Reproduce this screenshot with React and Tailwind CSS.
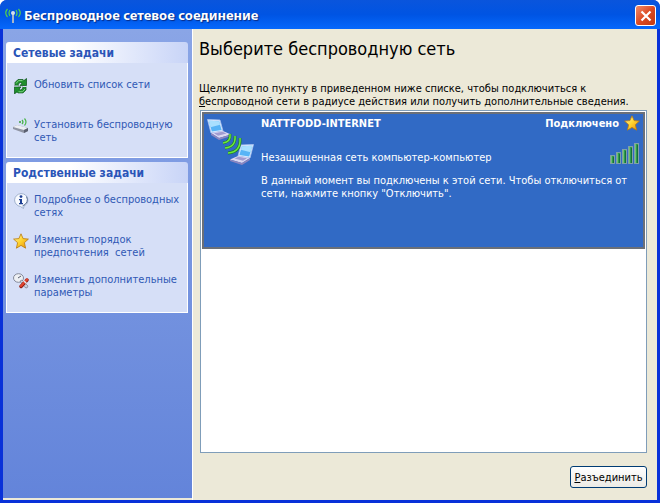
import { useId } from "react";

const RefreshArrow = () => (
  <>
    <path d="M2 8V4.500L5 1.500 10 1.500 11 2.500 13.500.5 13.500 7.500H7L9 5.200 7.500 4.500 5.500 5.500 5 8z" fill="#1f8f2e" stroke="#0a5217" strokeWidth=".7" />
    <path d="M3 5.500L5.500 2.600H9.500" fill="none" stroke="#7fd885" />
  </>
);

const RefreshIcon = () => (
  <svg viewBox="0 0 16 16" className="size-4 shrink-0" aria-hidden="true">
    <RefreshArrow />
    <g transform="rotate(180 7.500 8.200)">
      <RefreshArrow />
    </g>
    <path d="M2 8h3M10 8.500h3.500" stroke="#d6dff7" strokeWidth="1" />
  </svg>
);

const RouterIcon = () => (
  <svg viewBox="0 0 16 16" className="size-4 shrink-0" aria-hidden="true">
    <path d="M0 9l4-2 11 3v3l-4 2L0 11z" fill="#8f94a3" />
    <path d="M0 9l4-2 11 3-4 2z" fill="#eceef4" />
    <path d="M11 12l4-2v3l-4 2z" fill="#5b6070" />
    <circle cx="7" cy="4" r="1" fill="#3a9a3a" />
    <path d="M9 2q2 2 0 4M11.500 .5q3 3.500 0 7" fill="none" stroke="#49b549" strokeWidth="1.200" />
  </svg>
);

const InfoIcon = () => (
  <svg viewBox="0 0 16 16" className="size-4 shrink-0" aria-hidden="true">
    <path d="M8 .6a7 6.500 0 0 1 3 12.300L10.500 15.500 7.500 13.500A7 6.500 0 0 1 8 .6z" fill="#f7faff" stroke="#9fb0cc" />
    <path d="M13.500 3.500q3 6-4 9.500" fill="none" stroke="#5f7398" />
    <circle cx="8" cy="3.600" r="1.400" fill="#1c3f94" />
    <path d="M6 6h3v4h1v1.300H6V10h1V7.200H6z" fill="#1c3f94" />
  </svg>
);

const StarIcon = () => {
  const id = useId();
  return (
    <svg viewBox="0 0 16 16" className="size-4 shrink-0" aria-hidden="true">
      <linearGradient id={id} x1="0" y1="0" x2="1" y2="1">
        <stop offset="0" stopColor="#fffbb0" />
        <stop offset=".5" stopColor="#ffd32e" />
        <stop offset="1" stopColor="#e88a08" />
      </linearGradient>
      <path
        d="M8 .8l2.100 4.800 5.300.5-4 3.600 1.200 5.500L8 12.400l-4.600 2.800 1.200-5.500-4-3.600 5.300-.5z"
        fill={`url(#${id})`}
        stroke="#b9780c"
        strokeWidth=".8"
        strokeLinejoin="round"
      />
    </svg>
  );
};

const SettingsIcon = () => (
  <svg viewBox="0 0 16 16" className="size-4 shrink-0" aria-hidden="true">
    <ellipse cx="5.500" cy="5" rx="5" ry="4.300" fill="#eef0f4" stroke="#84899a" />
    <path d="M5 5l3-2" stroke="#555b6c" fill="none" />
    <path d="M7 8l2-1 6 6-1 2-2-.5z" fill="#c9ced8" stroke="#6b7080" strokeWidth=".6" />
    <path d="M14 7l-6 6.500" stroke="#8e1c12" strokeWidth="3.400" strokeLinecap="round" />
    <path d="M14 6.500l-6 6.500" stroke="#e2452f" strokeWidth="2.200" strokeLinecap="round" />
    <path d="M10.500 7.500l3 3" stroke="#e6e8ee" strokeWidth="1.400" />
  </svg>
);

const AntennaIcon = () => (
  <svg viewBox="0 0 18 16" className="h-4 w-[18px] shrink-0" aria-hidden="true">
    <path d="M9 6v9" stroke="#a9b6c9" strokeWidth="2" />
    <circle cx="9" cy="5" r="2" fill="#d5deea" />
    <path d="M6 2q-2 3 0 6M12 2q2 3 0 6M3.500 1q-3.500 4 0 8M14.500 1q3.500 4 0 8" fill="none" stroke="#52d04e" strokeWidth="1.200" />
  </svg>
);

const Laptop = () => (
  <>
    <path d="M.5 1.500l12.500.5 3 11-12 2z" fill="#dcecff" stroke="#a8c2f0" strokeWidth=".8" />
    <path d="M1.800 2.700l10.300.5 2.500 8.800-9.800 1.600z" fill="#58b4f6" />
    <path d="M1.800 2.700l10.300.5 1 3.600-9.600 2.500z" fill="#a9e0ff" />
    <path d="M4 15l12-2 8 3.500-12 3.500z" fill="#dcd8f2" />
    <path d="M7 15.300l8.500-1.500 4 1.700-8.500 2.200z" fill="#a09bd0" />
    <path d="M4 15l8 5 12-3.500v1.500l-12 4-8-5z" fill="#8c86bf" />
  </>
);

const AdHocIcon = () => (
  <svg viewBox="0 0 48 48" className="size-12 shrink-0" aria-hidden="true">
    <g transform="translate(1 1)">
      <Laptop />
    </g>
    <g transform="translate(48 26) scale(-1 1)">
      <Laptop />
    </g>
    <g fill="none" stroke="#1f7d2a" strokeWidth="2.800">
      <path d="M24 17q1 8-7 9M29 19q1 11-10 12M34 21q1 14-12 15" />
    </g>
    <g fill="none" stroke="#6be63c" strokeWidth="1.500">
      <path d="M24 17q1 8-7 9M29 19q1 11-10 12M34 21q1 14-12 15" />
    </g>
  </svg>
);

const SignalIcon = () => (
  <svg viewBox="0 0 30 22" className="h-[22px] w-[30px]" role="img" aria-label="Уровень сигнала">
    {[8, 11, 14, 17, 20].map((h, i) => (
      <g key={h}>
        <rect x={i * 6 + 0.5} y={21.5 - h} width="4" height={h} fill="#2f9a4c" stroke="#7f9fa8" />
        <rect x={i * 6 + 1} y={22 - h} width="1" height={h - 1} fill="#6cc070" />
        <rect x={i * 6 + 3} y={23 - h} width="1" height={h - 2} fill="#16703a" />
      </g>
    ))}
  </svg>
);

const Task = ({ icon, children }) => (
  <li>
    <a href="#" className="flex items-start gap-[5px] text-[#3059b5] hover:underline">
      {icon}
      <span>{children}</span>
    </a>
  </li>
);

const TaskPanel = ({ title, listClass, children }) => (
  <section>
    <h2 className="flex h-[21px] items-center rounded-t-[3px] bg-linear-to-r from-white from-35% to-[#c8d4f7] px-[7px] text-xs font-bold text-[#2a55b8]">
      {title}
    </h2>
    <ul className={`flex flex-col border border-t-0 border-white bg-[#d6dff7] pr-[2px] pb-[13px] pl-[6px] ${listClass}`}>
      {children}
    </ul>
  </section>
);

const App = () => {
  return (
    <div className="flex min-h-screen flex-col overflow-hidden rounded-t-[7px] bg-[#0831d9] font-['DejaVu_Sans_Condensed','DejaVu_Sans',sans-serif] text-[11px] leading-[13px] text-black">
      <header className="flex h-[29px] shrink-0 items-center gap-[2px] bg-linear-to-b from-[#0a55dc] via-[#0054e3] to-[#0668fc] px-1 pt-[2px]">
        <AntennaIcon />
        <h1 className="grow font-['Noto_Sans',sans-serif] text-[13px] font-bold text-white [text-shadow:1px_1px_1px_#0a2a80]">
          Беспроводное сетевое соединение
        </h1>
        <button
          type="button"
          aria-label="Закрыть"
          className="flex size-[21px] items-center justify-center rounded-[3px] border border-white bg-linear-to-br from-[#f08a68] via-[#dc4a22] to-[#c23a10]"
        >
          <svg viewBox="0 0 12 12" className="size-3" aria-hidden="true">
            <path d="M1.500 1.500l9 9M10.500 1.500l-9 9" stroke="#fff" strokeWidth="2.200" />
          </svg>
        </button>
      </header>

      <div className="flex grow border-x-[3px] border-b-[3px] border-[#0831d9] bg-[#ece9d8]">
        <aside className="mb-[2px] flex w-[189px] shrink-0 flex-col gap-1 bg-linear-to-b from-[#8aa5e6] to-[#6384da] pt-[13px] pr-1 pl-[3px]">
          <TaskPanel title="Сетевые задачи" listClass="gap-6 pt-[15px]">
            <Task icon={<RefreshIcon />}>Обновить список сети</Task>
            <Task icon={<RouterIcon />}>Установить беспроводную сеть</Task>
          </TaskPanel>
          <TaskPanel title="Родственные задачи" listClass="gap-[14px] pt-[10px]">
            <Task icon={<InfoIcon />}>Подробнее о беспроводных сетях</Task>
            <Task icon={<StarIcon />}>Изменить порядок предпочтения&nbsp; сетей</Task>
            <Task icon={<SettingsIcon />}>Изменить дополнительные параметры</Task>
          </TaskPanel>
        </aside>

        <main className="flex grow flex-col border-l border-white pr-[10px] pb-3 pl-[6px]">
          <h2 className="mt-[9px] text-[18px] leading-[22px]">Выберите беспроводную сеть</h2>
          <p className="mt-[22px] mb-[2px]">
            Щелкните по пункту в приведенном ниже списке, чтобы подключиться к{" "}
            <br />
            <u>б</u>еспроводной сети в радиусе действия или получить дополнительные сведения.
          </p>

          <ul className="ml-px grow border border-[#7f9db9] bg-white p-px">
            <li className="flex min-h-[137px] gap-[7px] border-2 border-[#6b7078] bg-[#316ac5] pt-[3px] pr-[3px] pl-[2px] text-white">
              <AdHocIcon />
              <div className="grow">
                <div className="-mt-[2px] flex h-4 items-center justify-between gap-[5px]">
                  <h3 className="grow font-bold">NATTFODD-INTERNET</h3>
                  <span className="font-bold">Подключено</span>
                  <StarIcon />
                </div>
                <div className="mt-[11px] flex items-end justify-between">
                  <p>Незащищенная сеть компьютер-компьютер</p>
                  <SignalIcon />
                </div>
                <p className="mt-[10px] max-w-[370px]">
                  В данный момент вы подключены к этой сети. Чтобы отключиться от сети, нажмите кнопку "Отключить".
                </p>
              </div>
            </li>
          </ul>

          <div className="mt-[13px] flex justify-end">
            <button
              type="button"
              className="h-[22px] w-[77px] rounded-[3px] border border-[#003c74] bg-linear-to-b from-white to-[#ecebe5]"
            >
              <u>Р</u>азъединить
            </button>
          </div>
        </main>
      </div>
    </div>
  );
};

export default App;
